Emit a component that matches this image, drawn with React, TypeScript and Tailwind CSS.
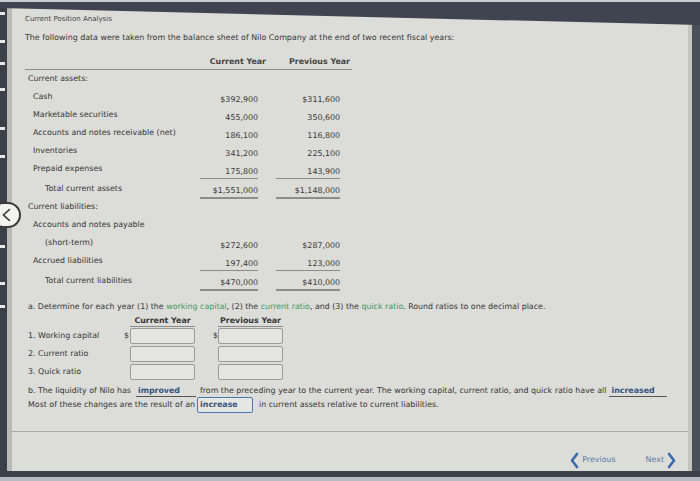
import React from 'react';

interface Row {
  label: string;
  cur?: string;
  prev?: string;
  indent?: number;
  total?: boolean;
  heading?: boolean;
}

const assets: Row[] = [
  { label: 'Current assets:', heading: true },
  { label: 'Cash', cur: '$392,900', prev: '$311,600', indent: 1 },
  { label: 'Marketable securities', cur: '455,000', prev: '350,600', indent: 1 },
  { label: 'Accounts and notes receivable (net)', cur: '186,100', prev: '116,800', indent: 1 },
  { label: 'Inventories', cur: '341,200', prev: '225,100', indent: 1 },
  { label: 'Prepaid expenses', cur: '175,800', prev: '143,900', indent: 1 },
  { label: 'Total current assets', cur: '$1,551,000', prev: '$1,148,000', indent: 2, total: true },
];

const liabilities: Row[] = [
  { label: 'Current liabilities:', heading: true },
  { label: 'Accounts and notes payable', indent: 1 },
  { label: '(short-term)', cur: '$272,600', prev: '$287,000', indent: 2 },
  { label: 'Accrued liabilities', cur: '197,400', prev: '123,000', indent: 1 },
  { label: 'Total current liabilities', cur: '$470,000', prev: '$410,000', indent: 2, total: true },
];

const dashes = [12, 40, 62, 88, 127, 155, 245, 282, 305];

const TableRow: React.FC<{ row: Row }> = ({ row }) => {
  const pad = row.indent === 2 ? 'pl-[20px]' : row.indent === 1 ? 'pl-[8px]' : 'pl-[3px]';
  return (
    <div className="grid grid-cols-[175px_58px_82px] h-[18px]">
      <div className={`flex items-center whitespace-nowrap ${pad}`}>{row.label}</div>
      <div
        className={`flex items-center justify-end pt-[6px] ${
          row.total ? 'border-t border-b-2 border-[#8c8c8a]' : ''
        }`}
      >
        {row.cur}
      </div>
      <div className="flex justify-end">
        <div
          className={`w-[64px] flex items-center justify-end pt-[6px] ${
            row.total ? 'border-t border-b-2 border-[#8c8c8a]' : ''
          }`}
        >
          {row.prev}
        </div>
      </div>
    </div>
  );
};

const Input: React.FC = () => (
  <div className="w-[65px] h-[16px] border border-[#9a9a98] rounded-[2px] bg-[#e4e4e1]" />
);

const Chevron: React.FC<{ dir: 'left' | 'right' }> = ({ dir }) => (
  <svg width="9" height="17" viewBox="0 0 9 17">
    <path
      d={dir === 'left' ? 'M7 2 L2 8.5 L7 15' : 'M2 2 L7 8.5 L2 15'}
      fill="none"
      stroke="#3a6aa8"
      strokeWidth="2.6"
      strokeLinecap="round"
      strokeLinejoin="round"
    />
  </svg>
);

export default function App() {
  const ratioRows = ['1. Working capital', '2. Current ratio', '3. Quick ratio'];

  return (
    <div
      className="relative w-[700px] h-[481px] overflow-hidden bg-[#3f4450] flex flex-col text-[7.9px] text-[#363636]"
      style={{ fontFamily: '"DejaVu Sans", Verdana, sans-serif' }}
    >
      <div className="h-[8px] shrink-0" />
      <div className="flex flex-1 min-h-0">
        {/* left bezel */}
        <div className="w-[12px] flex">
          <div className="w-[7px] flex flex-col bg-[#3a3f48]">
            {dashes.map((y, i) => (
              <div
                key={i}
                className="h-[3px] w-[5px] bg-[#e8e8e8]"
                style={{ marginTop: i === 0 ? y - 8 : y - dashes[i - 1] - 3 }}
              />
            ))}
          </div>
          <div className="w-[5px] bg-[#b9bab8]" />
        </div>

        {/* panel */}
        <div className="flex-1 flex flex-col bg-[#dcdcd8]">
          <div className="pl-[13px] pt-[6px]">
            <div className="h-[10px] flex items-center text-[7px] text-[#444]">Current Position Analysis</div>
            <div className="h-[10px] mt-[9px] flex items-center whitespace-nowrap">
              The following data were taken from the balance sheet of Nilo Company at the end of two recent fiscal years:
            </div>

            {/* balance sheet */}
            <div className="mt-[13px] w-[327px]">
              <div className="grid grid-cols-[175px_58px_82px] h-[14px] border-b border-[#8c8c8a] font-bold text-[#444] whitespace-nowrap">
                <div />
                <div className="flex items-start justify-end -mr-[8px]">Current Year</div>
                <div className="flex items-start justify-end -mr-[10px]">Previous Year</div>
              </div>
              {assets.map((r, i) => (
                <TableRow key={i} row={r} />
              ))}
              <div className="h-[2px]" />
              {liabilities.map((r, i) => (
                <TableRow key={i} row={r} />
              ))}
            </div>

            {/* part a */}
            <div className="mt-[13px] h-[12px] flex items-center pl-[3px] whitespace-nowrap">
              <span>
                a. Determine for each year (1) the <span className="text-[#3f9a5f]">working capital</span>, (2) the{' '}
                <span className="text-[#3f9a5f]">current ratio</span>, and (3) the{' '}
                <span className="text-[#3f9a5f]">quick ratio</span>. Round ratios to one decimal place.
              </span>
            </div>

            <div className="mt-[2px] grid grid-cols-[99px_6px_65px_18px_5px_65px] whitespace-nowrap">
              <div className="h-[12px]" />
              <div />
              <div className="h-[12px] flex justify-center font-bold border-b border-[#8c8c8a]">Current Year</div>
              <div />
              <div />
              <div className="h-[12px] flex justify-center font-bold border-b border-[#8c8c8a]">Previous Year</div>

              {ratioRows.map((label, i) => (
                <React.Fragment key={i}>
                  <div className="h-[18px] flex items-center pl-[3px]">{label}</div>
                  <div className="flex items-center">{i === 0 ? '$' : ''}</div>
                  <div className="flex items-center">
                    <Input />
                  </div>
                  <div />
                  <div className="flex items-center">{i === 0 ? '$' : ''}</div>
                  <div className="flex items-center">
                    <Input />
                  </div>
                </React.Fragment>
              ))}
            </div>

            {/* part b */}
            <div className="mt-[4px] h-[12px] flex items-center pl-[3px] whitespace-nowrap">
              <span>b. The liquidity of Nilo has</span>
              <span className="ml-[5px] w-[60px] border-b border-[#555] font-bold text-[#35557f] pl-[2px] leading-[11px]">
                improved
              </span>
              <span className="ml-[4px]">
                from the preceding year to the current year. The working capital, current ratio, and quick ratio have all
              </span>
              <span className="ml-[3px] w-[58px] border-b border-[#555] font-bold text-[#35557f] pl-[2px] leading-[11px]">
                increased
              </span>
            </div>
            <div className="h-[16px] flex items-center pl-[3px] whitespace-nowrap">
              <span>Most of these changes are the result of an</span>
              <span className="ml-[2px] w-[56px] h-[16px] border border-[#4a78b0] rounded-[2px] flex items-center pl-[2px] font-bold text-[#35557f] bg-[#e6e6e3]">
                increase
              </span>
              <span className="ml-[6px]">in current assets relative to current liabilities.</span>
            </div>
          </div>

          <div className="mt-[18px] border-t border-[#a9a9a6]" />

          <div className="mt-[20px] h-[16px] flex items-center justify-end gap-[30px] pr-[12px] text-[#5b7ba5]">
            <div className="flex items-center gap-[3px]">
              <Chevron dir="left" />
              <span>Previous</span>
            </div>
            <div className="flex items-center gap-[3px]">
              <span>Next</span>
              <Chevron dir="right" />
            </div>
          </div>
        </div>

        {/* right bezel */}
        <div className="w-[12px] flex">
          <div className="w-[4px] bg-[#c4c4c1]" />
          <div className="flex-1 bg-[#4a4f58]" />
        </div>
      </div>
      <div className="h-[10px] shrink-0 flex flex-col">
        <div className="h-[6px] bg-[#3b4049]" />
        <div className="flex-1 bg-[#b8bcc0]" />
      </div>

      {/* top bezel skew */}
      <svg className="absolute top-0 left-0" width="700" height="26" viewBox="0 0 700 26">
        <polygon points="0,0 700,0 700,2 0,2" fill="#c9ccce" />
        <polygon points="0,2 700,2 700,25 0,8" fill="#3f4450" />
      </svg>

      {/* back button */}
      <div className="absolute left-[-10px] top-[202px] w-[31px] h-[26px] rounded-full border-2 border-[#3a3a3a] bg-[#f2f2f0] flex items-center justify-end pr-[8px]">
        <svg width="9" height="14" viewBox="0 0 9 14">
          <path d="M7.5 1.5 L1.5 7 L7.5 12.5" fill="none" stroke="#333" strokeWidth="1.6" strokeLinecap="round" />
        </svg>
      </div>
    </div>
  );
}
